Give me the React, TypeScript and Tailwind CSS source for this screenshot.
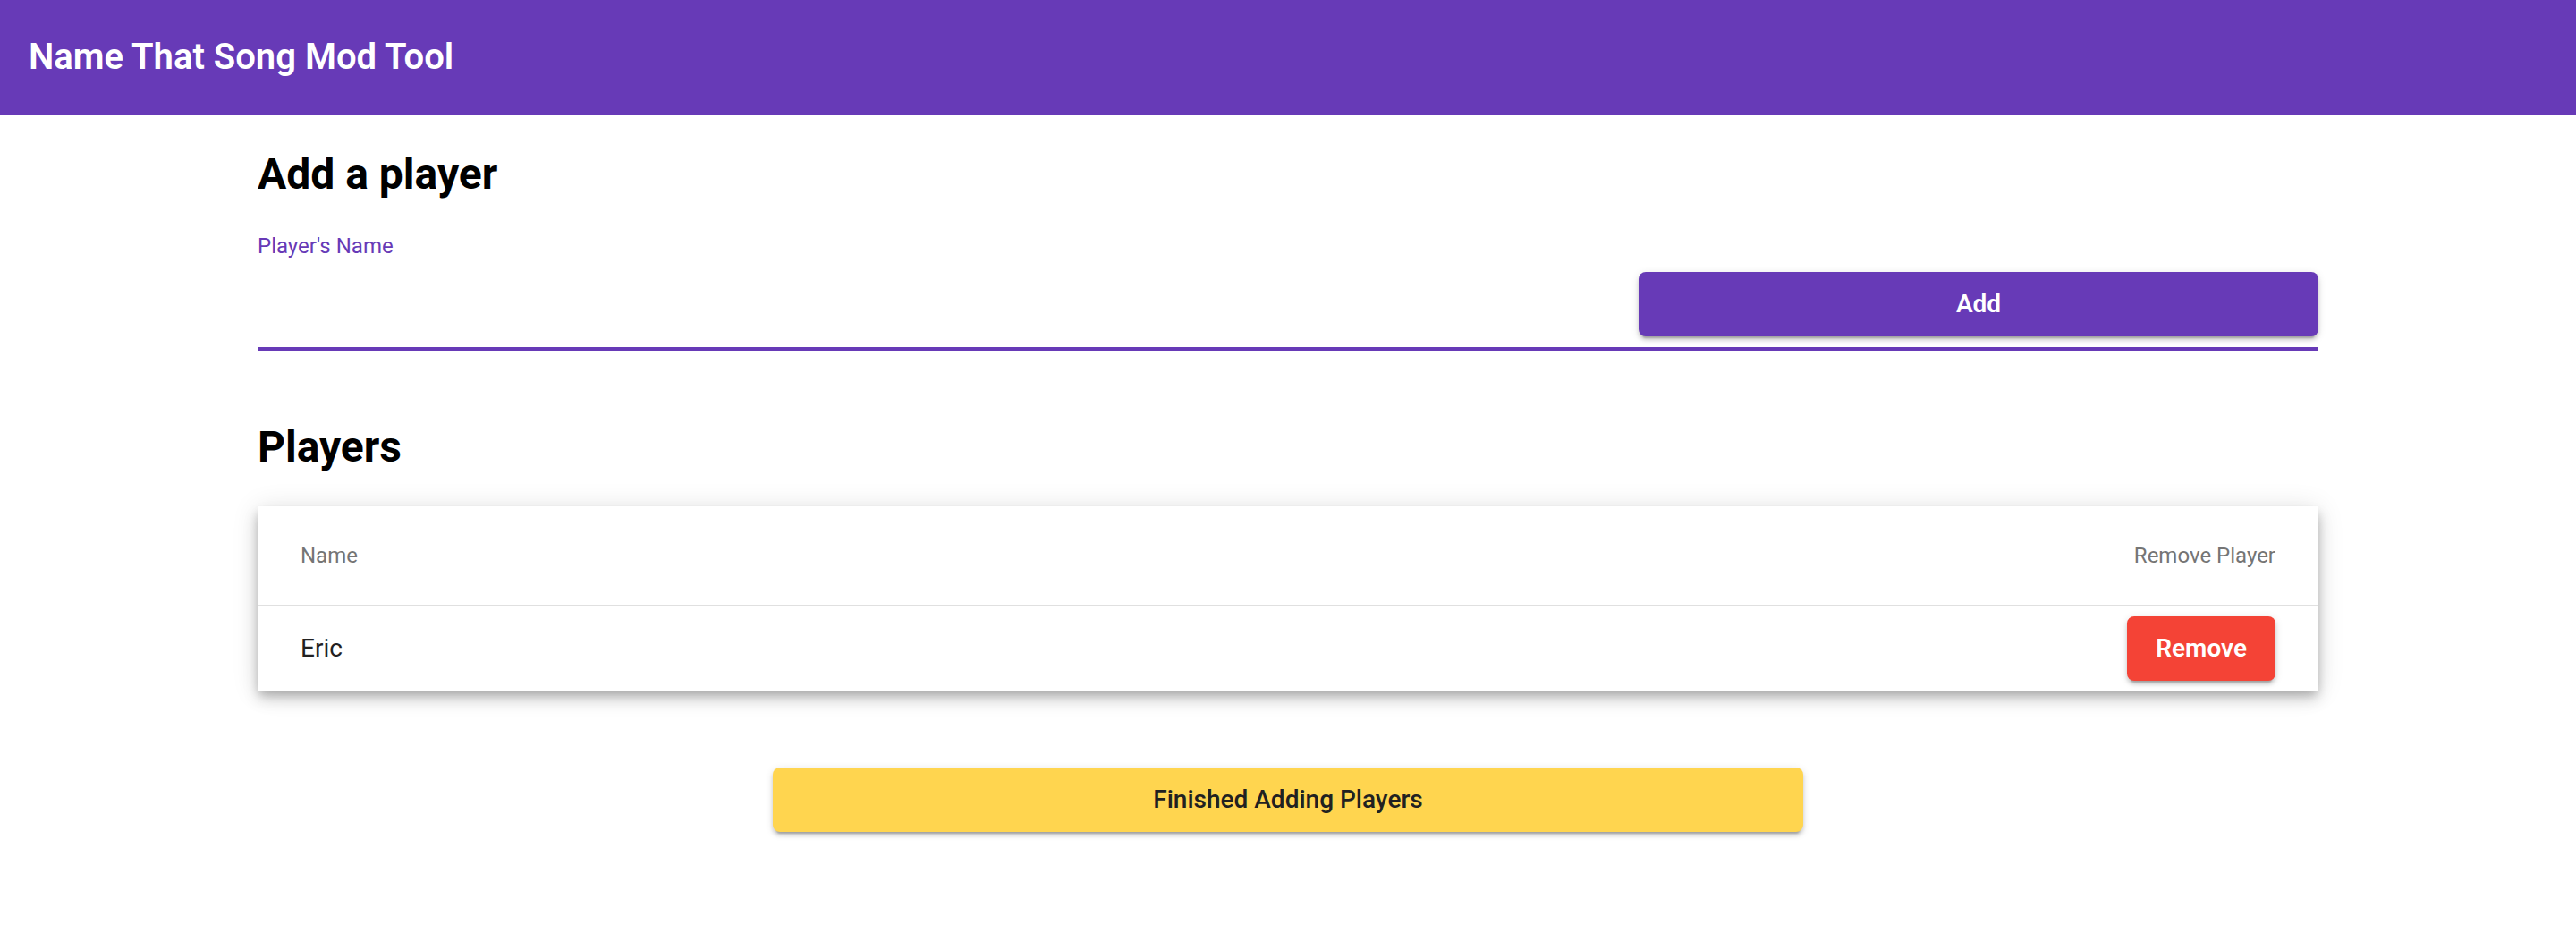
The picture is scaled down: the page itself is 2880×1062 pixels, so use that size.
import { FC, useState } from "react";

const PURPLE = "bg-[#673ab7]";
const BTN_SHADOW =
  "shadow-[0_6px_2px_-4px_rgba(0,0,0,0.2),0_4px_4px_0_rgba(0,0,0,0.14),0_2px_10px_0_rgba(0,0,0,0.12)]";

export const Header: FC = () => {
  return (
    <header className={`${PURPLE} h-[128px] flex items-center px-[32px]`}>
      <h1 className="text-white text-[40px] leading-[48px] font-semibold">
        Name That Song Mod Tool
      </h1>
    </header>
  );
};

const App: FC = () => {
  const [players, setPlayers] = useState<string[]>(["Eric"]);
  const [name, setName] = useState("");

  const addPlayer = () => {
    if (!name.trim()) return;
    setPlayers((prev) => [...prev, name.trim()]);
    setName("");
  };

  return (
    <div className="min-h-screen bg-white font-['Roboto','Liberation_Sans',sans-serif]">
      <Header />
      <main className="w-[2304px] mx-auto">
        {/* add player form */}
        <h2 className="mt-[43px] text-[48px] leading-[48px] font-bold text-black">
          Add a player
        </h2>
        <label className="block mt-[44px] text-[24px] leading-[24px] text-[#673ab7]">
          Player's Name
        </label>
        <div className="mt-[17px] pb-[12px] border-b-4 border-[#673ab7] flex items-center">
          <input
            value={name}
            onChange={(e) => setName(e.target.value)}
            className="flex-1 h-[72px] outline-none text-[32px] text-[#212121] bg-transparent"
          />
          <button
            onClick={addPlayer}
            className={`${PURPLE} w-[760px] h-[72px] rounded-[8px] text-white text-[28px] font-semibold ${BTN_SHADOW}`}
          >
            Add
          </button>
        </div>

        {/* players table */}
        <h2 className="mt-[84px] text-[48px] leading-[48px] font-bold text-black">
          Players
        </h2>
        <div className="mt-[42px] bg-white shadow-[0_6px_10px_-2px_rgba(0,0,0,0.2),0_10px_16px_0_rgba(0,0,0,0.14),0_2px_28px_0_rgba(0,0,0,0.12)]">
          <div className="h-[112px] flex items-center justify-between px-[48px] border-b-2 border-[#e0e0e0] text-[24px] text-[#757575]">
            <span>Name</span>
            <span>Remove Player</span>
          </div>
          {players.map((player, index) => (
            <div
              key={index}
              className="h-[94px] flex items-center justify-between px-[48px] border-b-2 border-[#e0e0e0] last:border-b-0 text-[28px] text-[#212121]"
            >
              <span>{player}</span>
              <button
                onClick={() => setPlayers((prev) => prev.filter((_, i) => i !== index))}
                className={`bg-[#f44336] h-[72px] px-[32px] rounded-[8px] text-white text-[28px] font-semibold ${BTN_SHADOW}`}
              >
                Remove
              </button>
            </div>
          ))}
        </div>

        <div className="mt-[86px] flex justify-center">
          <button
            className={`bg-[#ffd54f] w-[1152px] h-[72px] rounded-[8px] text-[28px] font-medium text-[#212121] ${BTN_SHADOW}`}
          >
            Finished Adding Players
          </button>
        </div>
      </main>
    </div>
  );
};

export default App;
